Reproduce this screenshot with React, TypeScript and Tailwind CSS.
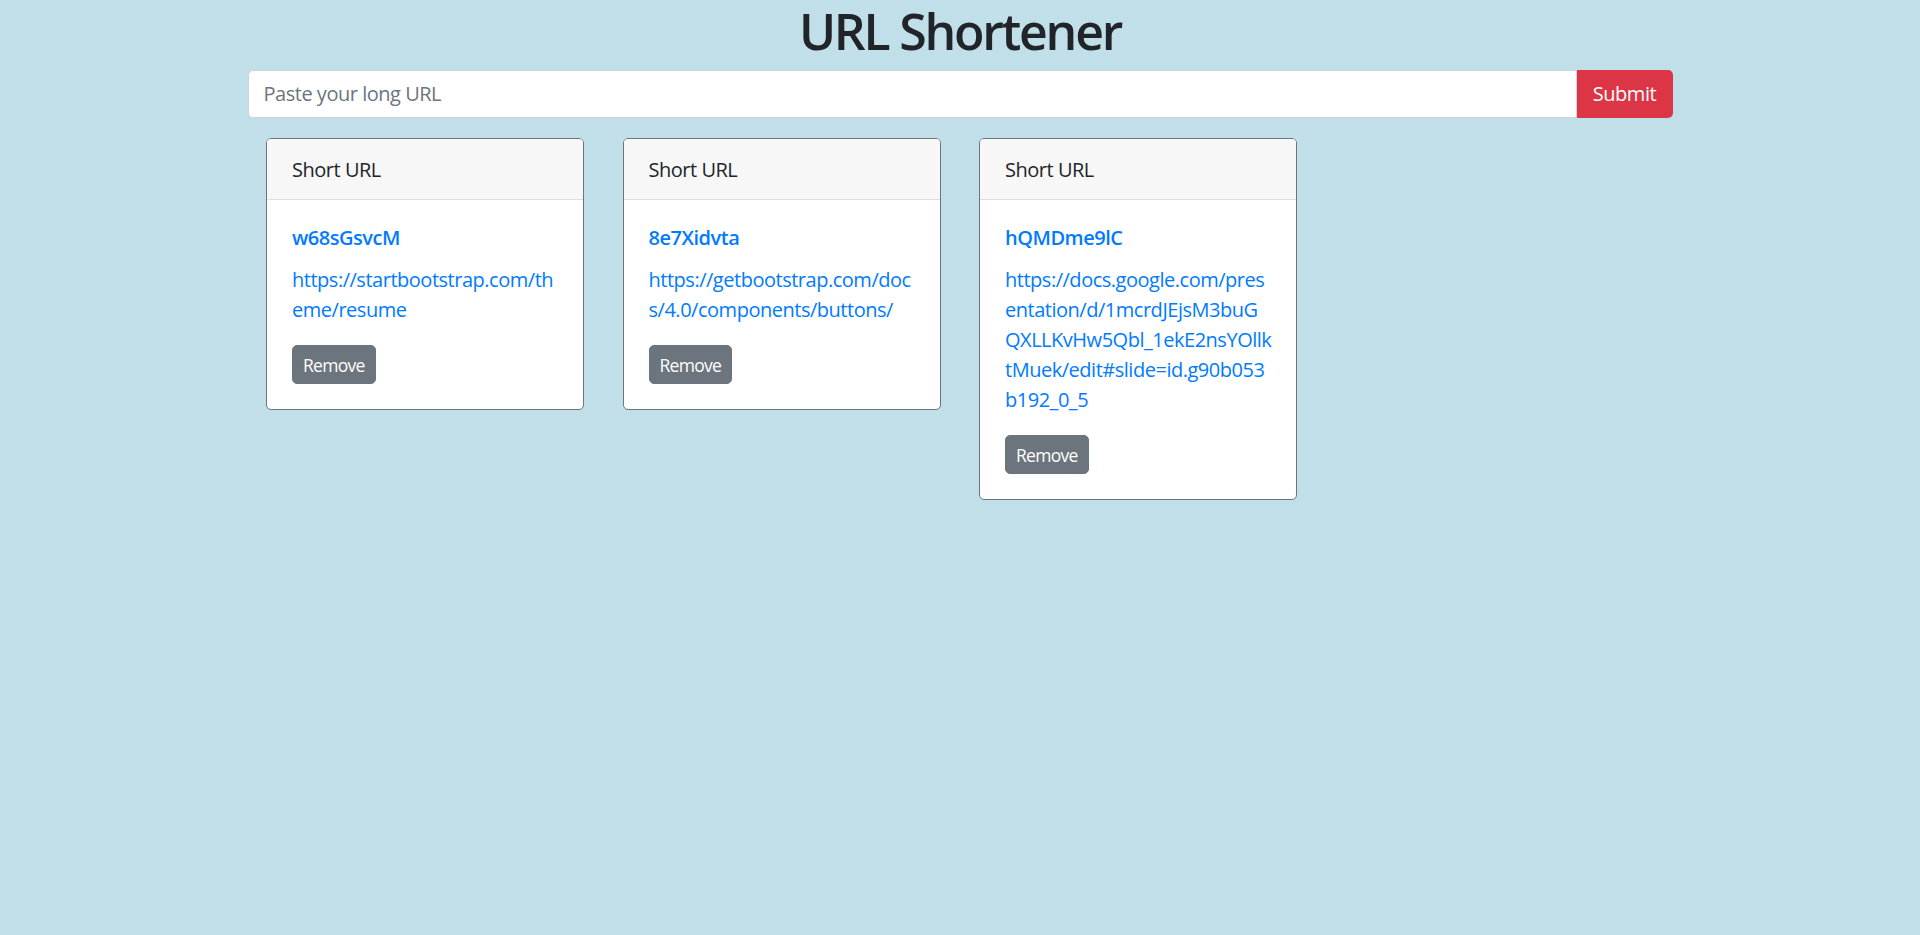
const links = [
  {
    code: "w68sGsvcM",
    lines: ["https://startbootstrap.com/th", "eme/resume"],
  },
  {
    code: "8e7Xidvta",
    lines: ["https://getbootstrap.com/doc", "s/4.0/components/buttons/"],
  },
  {
    code: "hQMDme9lC",
    lines: [
      "https://docs.google.com/pres",
      "entation/d/1mcrdJEjsM3buG",
      "QXLLKvHw5Qbl_1ekE2nsYOllk",
      "tMuek/edit#slide=id.g90b053",
      "b192_0_5",
    ],
  },
];

function LinkCard({ code, lines }: { code: string; lines: string[] }) {
  return (
    <div className="w-[318px] shrink-0 rounded-[5px] border-[1.25px] border-[#6c757d] bg-white overflow-hidden">
      <div className="bg-[#f7f7f7] border-b-[1.25px] border-[#dfdfdf] px-[25px] pt-[16px] pb-[14px] text-[20px] leading-[30px] text-[#212529]">
        Short URL
      </div>
      <div className="p-[25px]">
        <h5 className="mb-[15px] pt-px text-[20px] leading-[24px] font-semibold text-[#007bff]">{code}</h5>
        <p className="mb-[20px] text-[20px] leading-[30px] text-[#007bff]">
          {lines.map((l, i) => (
            <span key={i} className="block whitespace-nowrap">
              {l}
            </span>
          ))}
        </p>
        <button className="rounded-[5px] border-[1.25px] border-[#6c757d] bg-[#6c757d] px-[10px] pt-[6px] pb-[5px] text-[17.5px] leading-[26.25px] tracking-[-0.04em] text-white">
          Remove
        </button>
      </div>
    </div>
  );
}

export default function App() {
  return (
    <div
      className="min-h-screen bg-[#c1dfe9] text-[#212529] tracking-[-0.03em]"
      style={{ fontFamily: '"Open Sans", "Noto Sans", sans-serif' }}
    >
      <div className="mx-auto w-[1425px]">
        <h1 className="mb-[10px] pt-[2px] text-center text-[50px] leading-[58px] font-semibold tracking-[-0.045em]">
          URL Shortener
        </h1>
        <div className="flex h-[47.5px]">
          <input
            className="flex-1 rounded-l-[5px] border-[1.25px] border-[#ced4da] bg-white px-[15px] pt-px text-[20px] text-[#495057] placeholder:text-[#6c757d] outline-none"
            placeholder="Paste your long URL"
          />
          <button className="w-[96px] rounded-r-[5px] bg-[#dc3545] pt-px text-[20px] text-white">Submit</button>
        </div>
        <div className="mt-[20px] flex items-start gap-[38.5px] pl-[18.5px]">
          {links.map((l) => (
            <LinkCard key={l.code} code={l.code} lines={l.lines} />
          ))}
        </div>
      </div>
    </div>
  );
}
